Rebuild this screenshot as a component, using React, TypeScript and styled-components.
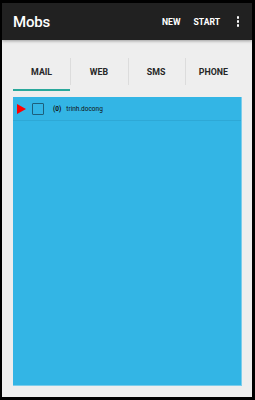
import React, { useState } from 'react'
import styled, { createGlobalStyle } from 'styled-components'

const GlobalStyle = createGlobalStyle`
  html, body {
    margin: 0;
    padding: 0;
    background: #000;
  }
  body {
    font-family: Roboto, 'Liberation Sans', Arial, sans-serif;
  }
`

const tabs = ['MAIL', 'WEB', 'SMS', 'PHONE']

const App: React.FC = () => {
  const [active, setActive] = useState<number>(0)
  const [checked, setChecked] = useState<boolean>(false)

  return (
    <Screen>
      <GlobalStyle />
      <Frame>
        <ActionBar>
          <Title>Mobs</Title>
          <Actions>
            <ActionButton $gap={13}>NEW</ActionButton>
            <ActionButton $gap={11}>START</ActionButton>
            <Overflow aria-label="More">
              <span />
              <span />
              <span />
            </Overflow>
          </Actions>
        </ActionBar>

        <Content>
          <TabBar>
            {tabs.map((t, i) => (
              <Tab key={t} $active={i === active} $first={i === 0} onClick={() => setActive(i)}>
                {t}
              </Tab>
            ))}
          </TabBar>

          <Panel>
            <MobRow>
              <Expander />
              <CheckBox $checked={checked} onClick={() => setChecked(!checked)} />
              <Count>(0)</Count>
              <Name>trinh.docong</Name>
            </MobRow>
          </Panel>
        </Content>
      </Frame>
    </Screen>
  )
}

const Screen = styled.div`
  width: 255px;
  height: 400px;
  box-sizing: border-box;
  padding: 3px 3px 3px 2px;
  display: flex;
`

const Frame = styled.div`
  flex: 1;
  display: flex;
  flex-direction: column;
  background: #eeeeee;
`

const ActionBar = styled.div`
  height: 37px;
  flex-shrink: 0;
  background: #212121;
  display: flex;
  align-items: center;
  justify-content: space-between;
  padding: 0 0 0 11px;
  box-shadow: 0 1px 3px rgba(0, 0, 0, 0.35);
  position: relative;
  z-index: 1;
`

const Title = styled.div`
  color: #fff;
  font-size: 15px;
  font-weight: 500;
  letter-spacing: -0.2px;
`

const Actions = styled.div`
  display: flex;
  align-items: center;
  height: 100%;
`

const ActionButton = styled.div<{ $gap: number }>`
  color: #fff;
  font-size: 8.6px;
  font-weight: 700;
  margin-right: ${(p) => p.$gap}px;
`

const Overflow = styled.div`
  width: 14px;
  display: flex;
  flex-direction: column;
  align-items: center;
  gap: 1.5px;
  margin-right: 7px;

  span {
    width: 2.5px;
    height: 2.5px;
    background: #fff;
    border-radius: 1px;
  }
`

const Content = styled.div`
  flex: 1;
  display: flex;
  flex-direction: column;
  padding: 14px 10px 11px 11px;
`

const TabBar = styled.div`
  display: flex;
  height: 37px;
`

const Tab = styled.div<{ $active: boolean; $first: boolean }>`
  flex: 1;
  position: relative;
  display: flex;
  align-items: center;
  justify-content: center;
  padding-top: 1px;
  font-size: 8.8px;
  font-weight: 700;
  color: #262626;
  cursor: pointer;
  box-sizing: border-box;
  border-bottom: 2px solid ${(p) => (p.$active ? '#29a89b' : 'transparent')};

  &::before {
    content: '';
    display: ${(p) => (p.$first ? 'none' : 'block')};
    position: absolute;
    left: 0;
    top: 4px;
    bottom: 4px;
    width: 1px;
    background: #dcdcdc;
  }
`

const Panel = styled.div`
  flex: 1;
  margin-top: 6px;
  background: #33b5e5;
  border-right: 1px solid #7ccdeb;
  border-bottom: 1px solid #7ccdeb;
`

const MobRow = styled.div`
  height: 23px;
  display: flex;
  align-items: center;
  border-bottom: 1px solid #2ea8d6;
  padding-left: 4px;
`

const Expander = styled.div`
  width: 0;
  height: 0;
  border-top: 5.5px solid transparent;
  border-bottom: 5.5px solid transparent;
  border-left: 9px solid #ff0000;
  margin-top: 1px;
`

const CheckBox = styled.div<{ $checked: boolean }>`
  width: 12px;
  height: 12px;
  box-sizing: border-box;
  border: 1.5px solid #1d5f7c;
  border-radius: 1px;
  margin-left: 6px;
  margin-top: 1px;
  background: ${(p) => (p.$checked ? '#1d5f7c' : 'transparent')};
  cursor: pointer;
`

const Count = styled.span`
  font-size: 6.5px;
  font-weight: 700;
  color: #111;
  margin-left: 9px;
`

const Name = styled.span`
  font-size: 6.5px;
  color: #111;
  margin-left: 5px;
`

export default App
